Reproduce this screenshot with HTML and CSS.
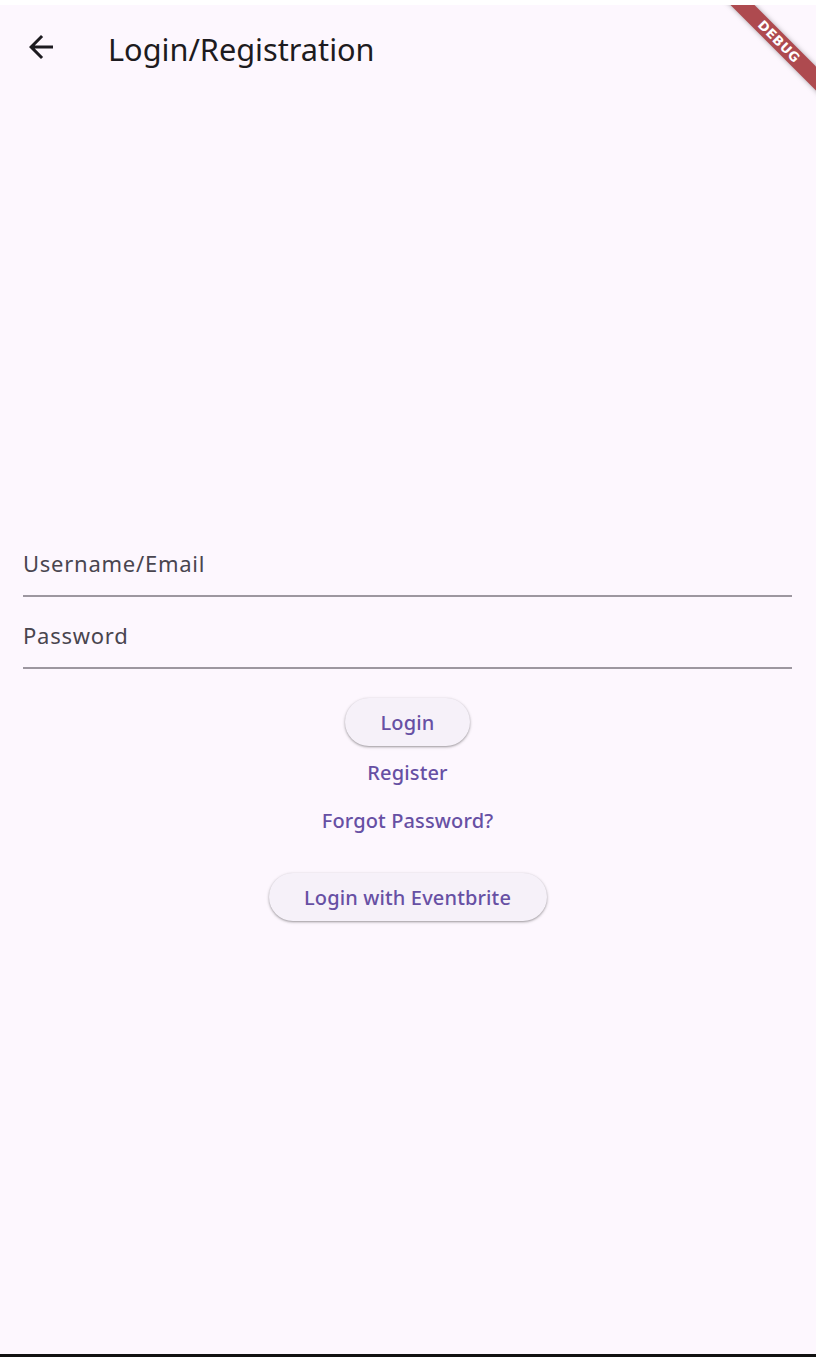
FILE: index.html
```html
<!DOCTYPE html>
<html lang="en">
<head>
<meta charset="utf-8">
<title>Login/Registration</title>
<link rel="stylesheet" href="styles.css">
</head>
<body>
<div class="app">
  <header class="appbar">
    <svg class="back" viewBox="0 0 24 24" width="36" height="36" aria-hidden="true">
      <path d="M20 11H7.83l5.59-5.59L12 4l-8 8 8 8 1.41-1.41L7.83 13H20v-2z" fill="#1d1b20"/>
    </svg>
    <h1 class="title">Login/Registration</h1>
  </header>
  <main class="form">
    <div class="field"><span class="hint">Username/Email</span></div>
    <div class="field"><span class="hint">Password</span></div>
    <div class="actions">
      <button class="btn elevated">Login</button>
      <button class="btn text first">Register</button>
      <button class="btn text">Forgot Password?</button>
      <button class="btn elevated wide">Login with Eventbrite</button>
    </div>
  </main>
  <div class="banner-wrap"><div class="banner">DEBUG</div></div>
</div>
<div class="frame-bottom"></div>
</body>
</html>
```

FILE: styles.css
```css
html, body {
  margin: 0;
  padding: 0;
  background: #ffffff;
}
body {
  font-family: "Noto Sans", "Open Sans", sans-serif;
  padding-top: 5px;
}
.app {
  position: relative;
  height: 1349px;
  background: #fdf7fe;
  overflow: hidden;
  display: flex;
  flex-direction: column;
}
.frame-bottom {
  height: 3px;
  background: #111111;
}
.appbar {
  height: 84px;
  display: flex;
  align-items: center;
  padding-left: 23px;
  box-sizing: border-box;
}
.back {
  display: block;
  flex: none;
}
.title {
  margin: 4px 0 0 49px;
  font-size: 30.7px;
  font-weight: 400;
  color: #1d1b20;
  line-height: normal;
}
.form {
  padding: 436px 24px 0 23px;
  display: flex;
  flex-direction: column;
}
.field {
  border-bottom: 2px solid #9d97a0;
  display: flex;
  align-items: flex-end;
  padding-bottom: 17px;
  box-sizing: content-box;
  height: 53px;
}
.hint {
  font-size: 22px;
  line-height: 30px;
  letter-spacing: 0.75px;
  color: #49454f;
}
.actions {
  display: flex;
  flex-direction: column;
  align-items: center;
  padding-top: 29px;
}
.btn {
  font-family: inherit;
  font-size: 20px;
  font-weight: 500;
  letter-spacing: 0.14px;
  color: #6750a4;
  border: none;
  background: transparent;
  height: 48px;
  padding: 0 28px;
  border-radius: 24px;
  cursor: pointer;
}
.elevated {
  background: #f6f1f9;
  box-shadow: 0 1px 2px rgba(0,0,0,0.28), 0 1px 3px 1px rgba(0,0,0,0.1);
  width: 125px;
  padding: 0;
}
.elevated.wide {
  width: 278px;
  margin-top: 29px;
}
.text.first {
  margin-top: 2px;
}
.banner-wrap {
  position: absolute;
  top: 0;
  right: 0;
  width: 120px;
  height: 120px;
  overflow: hidden;
  pointer-events: none;
}
.banner {
  position: absolute;
  width: 160px;
  height: 17px;
  left: calc(120px - 37px - 80px);
  top: calc(36px - 8px);
  transform: rotate(45deg);
  background: #ae4a4f;
  box-shadow: 0 0 5px rgba(0,0,0,0.35);
  color: #ffffff;
  font-family: "DejaVu Sans", sans-serif;
  font-weight: 700;
  font-size: 13px;
  line-height: 17px;
  text-align: center;
  letter-spacing: 0.5px;
}
```
